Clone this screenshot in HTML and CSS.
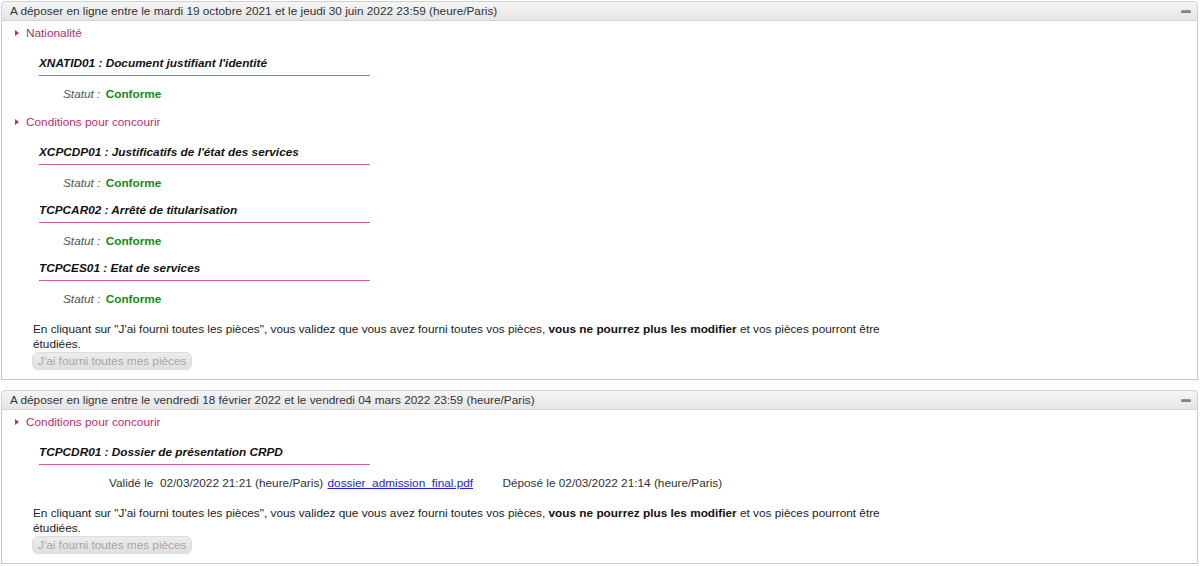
FILE: index.html
```html
<!DOCTYPE html>
<html lang="fr">
<head>
  <meta charset="UTF-8" />
  <title>Pièces justificatives</title>
  <link rel="stylesheet" href="styles.css">
</head>
<body>

<div class="page">

  <!-- Période 1 -->
  <div class="panel">
    <div class="panel-head">
      <span>A déposer en ligne entre le mardi 19 octobre 2021 et le jeudi 30 juin 2022 23:59 (heure/Paris)</span>
      <span class="toggle"></span>
    </div>
    <div class="panel-body">
      <div class="category">Nationalité</div>
      <div class="piece first">
        <div class="piece-title">XNATID01 : Document justifiant l'identité</div>
        <div class="piece-status"><span class="label">Statut :</span> <span class="ok">Conforme</span></div>
      </div>

      <div class="category">Conditions pour concourir</div>
      <div class="piece first">
        <div class="piece-title">XCPCDP01 : Justificatifs de l'état des services</div>
        <div class="piece-status"><span class="label">Statut :</span> <span class="ok">Conforme</span></div>
      </div>
      <div class="piece">
        <div class="piece-title">TCPCAR02 : Arrêté de titularisation</div>
        <div class="piece-status"><span class="label">Statut :</span> <span class="ok">Conforme</span></div>
      </div>
      <div class="piece">
        <div class="piece-title">TCPCES01 : Etat de services</div>
        <div class="piece-status"><span class="label">Statut :</span> <span class="ok">Conforme</span></div>
      </div>

      <p class="notice">En cliquant sur "J'ai fourni toutes les pièces", vous validez que vous avez fourni toutes vos pièces, <b>vous ne pourrez plus les modifier</b> et vos pièces pourront être étudiées.</p>
      <button class="done-btn" disabled>J'ai fourni toutes mes pièces</button>
    </div>
  </div>

  <!-- Période 2 -->
  <div class="panel">
    <div class="panel-head">
      <span>A déposer en ligne entre le vendredi 18 février 2022 et le vendredi 04 mars 2022 23:59 (heure/Paris)</span>
      <span class="toggle"></span>
    </div>
    <div class="panel-body">
      <div class="category">Conditions pour concourir</div>
      <div class="piece first">
        <div class="piece-title">TCPCDR01 : Dossier de présentation CRPD</div>
        <div class="piece-file">
          <span class="valid">Validé le&nbsp; 02/03/2022 21:21 (heure/Paris)</span>
          <a href="#" class="file-link">dossier_admission_final.pdf</a>
          <span class="deposit">Déposé le 02/03/2022 21:14 (heure/Paris)</span>
        </div>
      </div>

      <p class="notice">En cliquant sur "J'ai fourni toutes les pièces", vous validez que vous avez fourni toutes vos pièces, <b>vous ne pourrez plus les modifier</b> et vos pièces pourront être étudiées.</p>
      <button class="done-btn" disabled>J'ai fourni toutes mes pièces</button>
    </div>
  </div>

</div>

</body>
</html>
```

FILE: styles.css
```css
/* General */
body {
  margin: 0;
  font-family: "Liberation Sans", Arial, sans-serif;
  font-size: 11.8px;
  color: #222222;
  background-color: #ffffff;
}

.page {
  padding: 1px 2px 0 1px;
}

/* Panels */
.panel {
  margin-bottom: 10px;
}

.panel-head {
  display: flex;
  justify-content: space-between;
  align-items: center;
  height: 18px;
  line-height: 18px;
  padding: 0 6px 0 8px;
  border: 1px solid #d2d2d2;
  border-radius: 4px 4px 0 0;
  background: linear-gradient(#f5f5f5, #e5e5e5);
  color: #333333;
}

.toggle {
  width: 10px;
  height: 3px;
  border-radius: 1px;
  background: linear-gradient(#9a9a9a, #777777);
}

.panel-body {
  border: 1px solid #c9c9c9;
  border-top: none;
  padding: 4px 0 9px 0;
}

/* Categories */
.category {
  position: relative;
  line-height: 16px;
  padding-left: 24px;
  color: #b3306e;
  margin-top: 12px;
}

.category:first-child {
  margin-top: 0;
}

.category::before {
  content: "";
  position: absolute;
  left: 13px;
  top: 5px;
  border-left: 4px solid #b3306e;
  border-top: 3px solid transparent;
  border-bottom: 3px solid transparent;
}

/* Pieces */
.piece {
  margin-top: 11px;
}

.piece.first {
  margin-top: 14px;
}

.piece-title {
  width: 331px;
  margin-left: 37px;
  padding-bottom: 4px;
  line-height: 16px;
  font-weight: bold;
  font-style: italic;
  color: #111111;
  border-bottom: 1px solid #d4579b;
}

.piece-status {
  margin: 10px 0 0 61px;
  line-height: 16px;
}

.piece-status .label {
  font-style: italic;
  color: #555555;
  margin-right: 2px;
}

.ok {
  font-weight: bold;
  color: #148a14;
}

.piece-file {
  margin: 10px 0 1px 107px;
  line-height: 16px;
  color: #333333;
}

.file-link {
  color: #2222dd;
  margin-left: 1px;
}

.deposit {
  margin-left: 26px;
}

/* Notice and button */
.notice {
  max-width: 870px;
  margin: 15px 0 0 31px;
  line-height: 15px;
  color: #222222;
}

.notice b {
  color: #111111;
}

.done-btn {
  display: block;
  margin: 0 0 0 30px;
  height: 18px;
  padding: 0 5px;
  font-family: "Liberation Sans", Arial, sans-serif;
  font-size: 11.8px;
  line-height: 16px;
  color: #a6a6a6;
  background: linear-gradient(#ececec, #e0e0e0);
  border: 1px solid #dddddd;
  border-radius: 6px;
}
```
